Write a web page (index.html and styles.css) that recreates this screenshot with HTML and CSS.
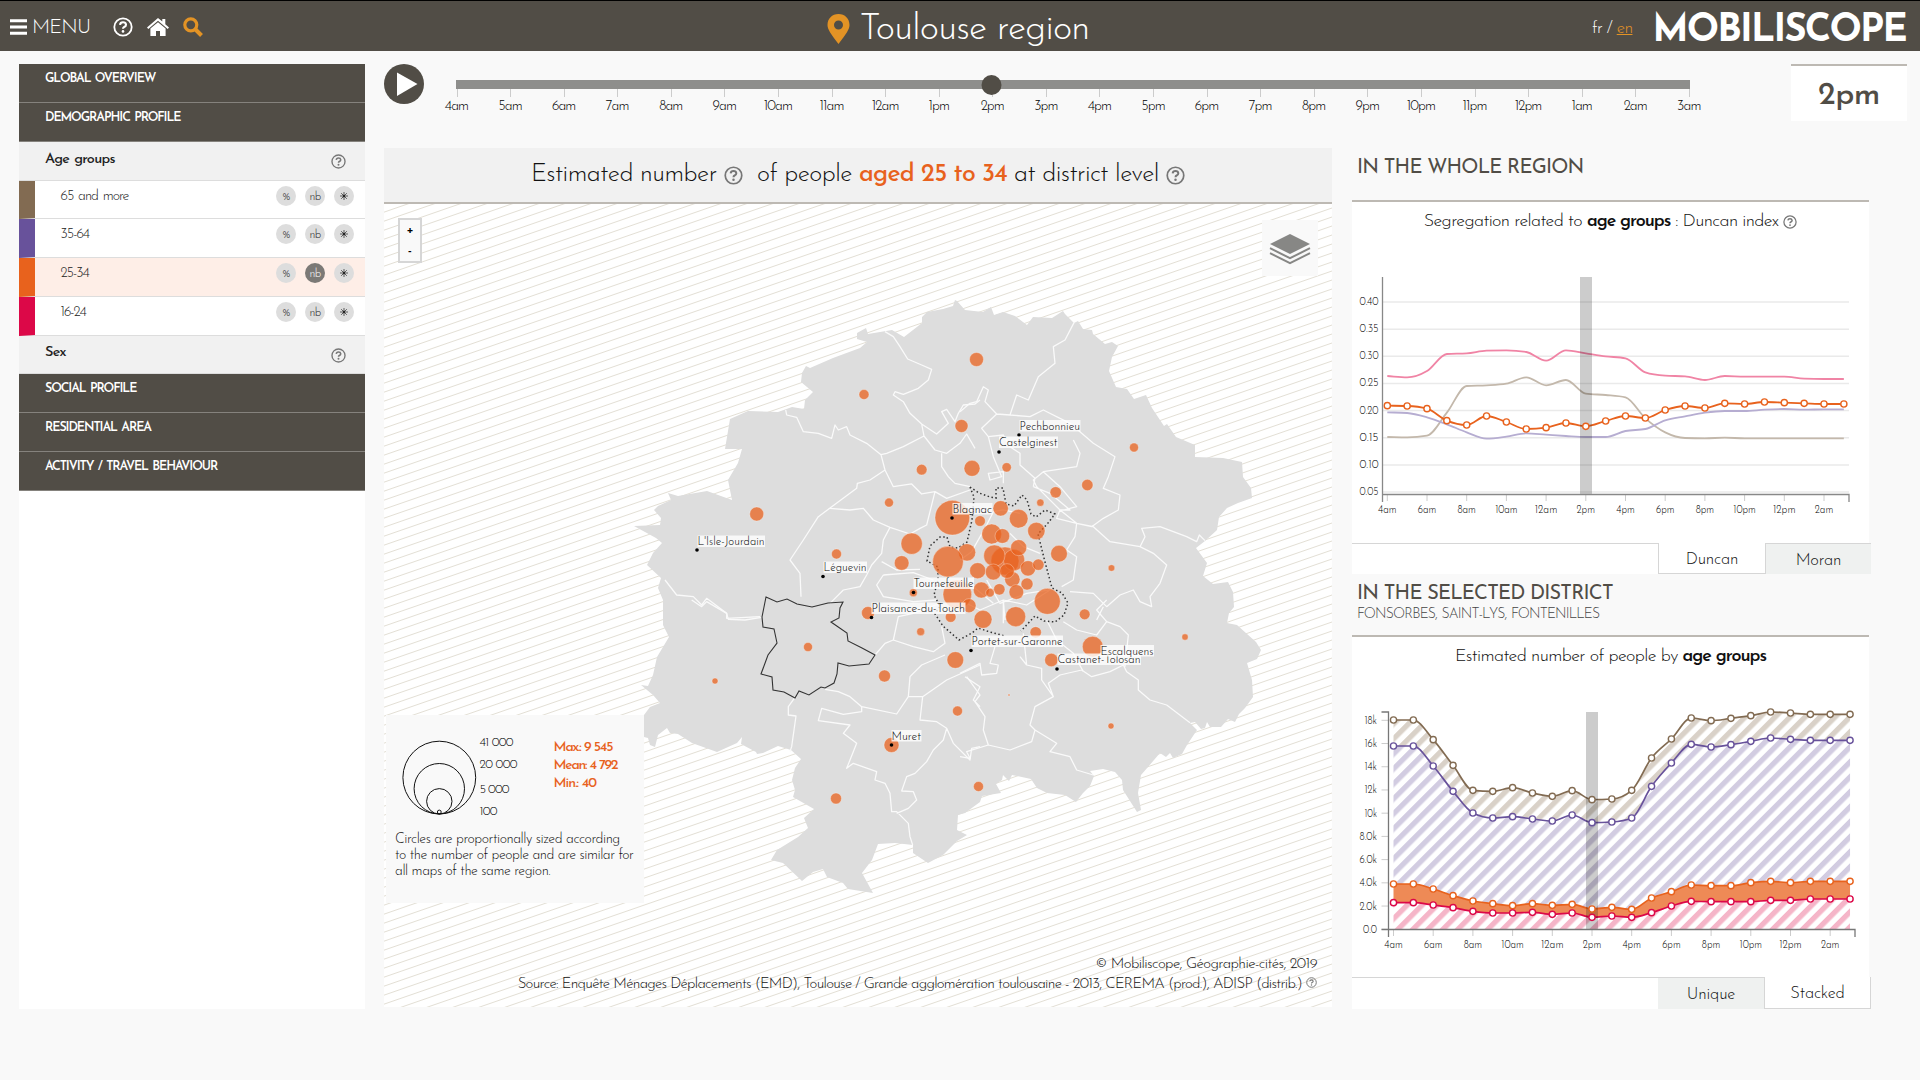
FILE: index.html
```html
<!DOCTYPE html>
<html lang="en">
<head>
<meta charset="utf-8">
<title>Mobiliscope - Toulouse region</title>
<link rel="stylesheet" href="styles.css">
</head>
<body>
<svg class="defs" width="0" height="0" aria-hidden="true">
  <symbol id="help" viewBox="0 0 20 20"><circle cx="10" cy="10" r="8.7" fill="none" stroke="currentColor" stroke-width="1.8"/><path d="M7 7.8Q7.3 5.3 10 5.3T13 7.7Q13 9.2 11.2 10Q10 10.6 10 11.8" fill="none" stroke="currentColor" stroke-width="2.1"/><circle cx="10" cy="14.4" r="1.3" fill="currentColor"/></symbol>
  <symbol id="star" viewBox="0 0 8 8"><path d="M4 0v8M0 4h8M1.200 1.200l5.600 5.600M6.800 1.200 1.200 6.800" stroke="currentColor" stroke-width=".7"/><circle cx="4" cy="4" r="1.200" fill="currentColor"/></symbol>
</svg>
<header class="topbar">
  <div class="nav">
    <svg class="burger" width="17" height="16" viewBox="0 0 17 16"><path d="M0 1.7h17M0 8h17M0 14.3h17" stroke="#fff" stroke-width="3"/></svg>
    <span class="menu">MENU</span>
    <svg class="nav-help" width="20" height="20"><use href="#help"/></svg>
    <svg class="home" width="22" height="18" viewBox="0 0 22 18"><path d="M11 0 0 9.4l1.3 1.5L11 2.8l9.7 8.1L22 9.4l-3.7-3.2V1h-3v2.6z" fill="#fff"/><path d="M11 4.2 3.4 10.500V18h5.600v-5h4v5h5.600v-7.500z" fill="#fff"/></svg>
    <svg class="search" width="20" height="20" viewBox="0 0 20 20"><circle cx="7.800" cy="7.800" r="6" fill="none" stroke="#e39325" stroke-width="3.200"/><path d="m12 12 6.500 6.500" stroke="#e39325" stroke-width="4"/></svg>
  </div>
  <h1 class="city"><svg width="23" height="30" viewBox="0 0 23 30"><path fill="#e39325" fill-rule="evenodd" d="M11.500 0C5 0 .5 4.700.5 11c0 4.500 3.500 9 11 19 7.500-10 11-14.500 11-19C22.500 4.700 18 0 11.500 0zm0 6.500a4.500 4.500 0 1 1 0 9 4.500 4.500 0 0 1 0-9z"/></svg><span>Toulouse region</span></h1>
  <div class="brand"><span class="lang">fr / <a>en</a></span><span class="logo">MOBILISCOPE</span></div>
</header>

<main class="page">
  <nav class="sidebar">
    <div class="cat">GLOBAL OVERVIEW</div>
    <div class="cat">DEMOGRAPHIC PROFILE</div>
    <div class="sub"><span>Age groups</span><svg width="15" height="15"><use href="#help"/></svg></div>
    <div class="opt brown"><span>65 and more</span><i>%</i><i>nb</i><i><svg width="8" height="8"><use href="#star"/></svg></i></div>
    <div class="opt purple"><span>35-64</span><i>%</i><i>nb</i><i><svg width="8" height="8"><use href="#star"/></svg></i></div>
    <div class="opt orange"><span>25-34</span><i>%</i><i class="on">nb</i><i><svg width="8" height="8"><use href="#star"/></svg></i></div>
    <div class="opt red"><span>16-24</span><i>%</i><i>nb</i><i><svg width="8" height="8"><use href="#star"/></svg></i></div>
    <div class="sub sex"><span>Sex</span><svg width="15" height="15"><use href="#help"/></svg></div>
    <div class="cat">SOCIAL PROFILE</div>
    <div class="cat">RESIDENTIAL AREA</div>
    <div class="cat">ACTIVITY / TRAVEL BEHAVIOUR</div>
  </nav>

  <div class="content">
    <section class="timeline">
      <svg id="slider" width="1330" height="70" viewBox="384 60 1330 70"></svg>
      <div class="clock">2pm</div>
    </section>
    <div class="columns">
      <section class="mapcard">
        <h2>Estimated number <svg width="19" height="19"><use href="#help"/></svg>  of people <b>aged 25 to 34</b> at district level <svg width="19" height="19"><use href="#help"/></svg></h2>
        <div class="map">
          <svg width="948" height="803" viewBox="384 204 948 803">
            <defs><pattern id="land" x="630" y="910" width="26" height="9" patternUnits="userSpaceOnUse"><rect width="26" height="9" fill="#fff"/><path d="M-26 18 52 -9M-26 9 26 -9M0 18 52 0" stroke="#e3dfd5" stroke-width="1"/></pattern></defs>
            <rect x="384" y="204" width="948" height="803" fill="url(#land)"/>
            <path class="region" d="M955 300 957 301 965 310 983 312 991 307 994 315 1003 312 1015 316 1027 325 1033 317 1052 318 1063 311 1065 314 1074 323 1078 321 1083 329 1092 330 1093 334 1105 344 1112 342 1118 346 1112 357 1109 371 1116 387 1127 389 1134 399 1146 395 1152 408 1164 426 1167 424 1176 437 1195 445 1195 457 1223 458 1242 462 1243 477 1251 488 1252 498 1238 503 1227 508 1219 517 1217 530 1205 541 1196 548 1207 563 1203 576 1213 584 1228 582 1233 592 1234 607 1229 613 1227 623 1237 625 1256 642 1261 650 1257 659 1247 663 1252 680 1253 697 1245 708 1239 714 1235 722 1228 719 1221 727 1210 727 1207 722 1205 728 1201 729 1195 722 1190 723 1197 730 1187 745 1182 754 1173 758 1170 753 1166 757 1160 753 1148 767 1141 775 1138 793 1141 810 1137 812 1123 790 1122 780 1115 772 1103 769 1090 771 1094 776 1090 786 1083 793 1076 802 1065 795 1047 793 1037 788 1031 779 1012 775 1009 781 1003 775 1002 780 996 784 1001 793 982 796 980 802 965 813 958 815 957 830 967 835 957 841 943 855 928 863 913 853 913 845 895 843 878 844 872 860 862 873 873 893 848 889 843 883 827 877 823 869 813 872 802 881 783 863 771 860 777 850 798 837 808 828 804 818 814 809 793 797 795 790 792 780 795 768 801 759 791 750 778 746 763 753 757 754 756 752 741 744 742 737 737 743 717 752 692 743 678 734 670 733 667 728 658 735 655 747 650 745 648 738 644 737 644 715 650 707 660 703 653 695 641 685 648 686 653 675 657 657 669 637 663 625 663 600 658 588 661 578 647 565 653 553 662 543 656 538 634 526 660 525 661 518 654 510 658 506 671 500 668 493 678 496 707 491 732 500 728 480 738 463 742 449 725 449 730 419 748 411 778 412 792 407 804 409 805 400 813 392 801 382 802 373 806 366 810 368 833 358 860 348 867 342 857 339 857 333 866 328 868 334 892 330 904 337 922 323 922 317 927 312 943 309 953 306Z"/>
            <g class="borders">
              <g transform="translate(620 280) scale(.33333)">
                <path d="M795 155 820 170 840 200 863 237 905 255 935 268 925 300 895 325 850 343 825 335 820 345 850 365 870 400 905 432 950 462 985 430 965 395 980 388 1005 425 1015 400 1030 375 1065 372 1080 360M905 432 912 468 850 500 800 520 783 524 740 490 690 465 680 440 655 450 645 435 635 475 595 460 550 455 530 412 500 405 497 390M783 524 795 570 750 600 712 610 710 625 595 710 550 780 510 840 540 880 543 950M795 570 820 620 875 612 905 642 945 635 920 735 900 745 870 762 810 742 760 720 730 685 690 690 630 685M912 468 945 510 980 520 1020 490 1040 462 1065 505M965 520 965 560 985 590 1005 610 1050 620M945 635 980 655 1050 630M810 742 790 780 785 820 755 855 740 885 720 920 670 930 630 970M785 845 830 870 900 868M790 885 880 878 940 900M790 885 770 915 790 950 880 965 950 960M135 900 170 945 220 950 245 975 260 955 320 1000 320 1015 420 1010"/>
              </g>
              <g transform="translate(960 280) scale(.33333)">
                <path d="M342 128 315 180 280 200 285 250 235 290 205 360 170 345 150 405 210 410 250 390 330 430 400 490 465 530 445 590 430 625 480 645 475 690 430 715 395 740 350 730 300 690 230 620 220 600 250 575 350 560 360 520 340 480M0 395 30 370 50 365 70 320 85 330 75 365 110 402 150 405M110 402 65 445 85 470 130 465 150 500 180 520 180 555 225 595 220 620M85 470 100 530 125 590 90 600 85 580 130 575 130 610M250 575 300 620 350 680 310 690M220 620 270 640 330 690 300 690 290 715 350 730 400 740 450 785 540 800 555 770 545 745 600 740 680 770 710 785 718 765 735 782M540 800 580 820 620 855 600 910 570 950 575 980 540 965 520 930 480 945 440 980 400 940 330 935M350 730 345 770 320 810 350 830 340 900 305 920M0 840 35 815 80 735 100 695 130 690 180 700M80 900 120 970 200 940 270 930M40 920 100 970M150 760 190 800 240 820M0 960 60 990 130 960 200 975 270 930M130 960 135 1020M430 980 410 1020"/>
              </g>
              <g transform="translate(620 600) scale(.33333)">
                <path d="M215 0 245 20 260 5 320 40 325 58 375 60 425 52M765 165 795 130 820 120 835 50 880 40 960 10M820 120 880 140 940 155 975 130 965 80M525 292 505 320 505 345 528 348 515 440 510 455M615 268 655 275 690 290 725 320 725 335 670 343 605 325 595 362 690 375 670 400 710 430 680 505 700 490 770 515 765 540 795 550 810 580 815 635 830 635 865 670 870 710 878 735M725 320 830 342 865 290 870 230 905 195 975 165M865 290 908 290 980 240 1080 195M908 290 900 360 950 365 980 385 970 420 940 450 920 485 885 520 860 530 845 573 880 575 890 600 865 625 830 640M980 385 1000 430 1050 480 1055 445 1080 440M1035 230 1080 260 1060 300 1080 320"/>
              </g>
              <g transform="translate(960 600) scale(.33333)">
                <path d="M0 220 60 190 65 225 110 220 115 195 90 190 105 140M20 230 60 285 45 305 75 350 70 390 85 435 150 450 215 425 225 390 210 375 225 320 280 290 245 240 245 205 200 195 190 100M85 435 20 455 30 475 0 470M225 390 290 430 270 455 330 470 350 510 400 525M280 290 265 250 300 225 365 210 395 230 450 215 490 195 500 215 535 240 535 270 570 300 620 315 690 368M260 60 290 120 340 160 370 215M310 65 350 90 410 105 440 65 480 80 505 105 495 200M440 0 410 30 440 65M180 170 200 195M130 0 130 70"/>
              </g>
            </g>
            <path class="city-limit" d="M970 487 979 493 990 497 996 498 996 488 1003 488 1006 504 1014 506 1022 495 1027 500 1031 514 1036 517 1045 510 1055 514 1048 523 1038 534 1045 562 1052 588 1062 593 1068 603 1064 615 1055 622 1044 621 1035 616 1021 631M970 487 974 497 972 520 967 542 958 548 950 547 947 537 940 537 930 546 927 561 938 567 938 580 934 595 940 606 935 614 943 626 959 640 972 633 978 628 990 632 1005 636"/>
            <path class="selected" d="M766 597 777 602 787 599 797 604 812 607 828 603 843 602 840 608 839 618 831 622 847 633 848 641 862 648 875 655 869 664 849 666 838 663 837 674 834 683 825 688 821 687 809 695 799 691 795 698 784 692 773 690 772 677 761 674 768 655 777 643 774 629 763 627 762 617Z"/>
            <g id="bubbles"></g>
            <g id="towns"></g>
          </svg>
          <div class="zoom"><span>+</span><span>-</span></div>
          <div class="layers"><svg width="42" height="32" viewBox="0 0 42 32"><path d="M21 1 41 11 21 21 1 11z" fill="#878785"/><path d="M1 15.200 21 25.200 41 15.200M1 20.200 21 30.200 41 20.200" fill="none" stroke="#878785" stroke-width="2"/></svg></div>
          <div class="legend">
            <svg width="258" height="113" viewBox="386 715 258 113">
              <g fill="none" stroke="#111"><circle cx="439.300" cy="777.600" r="36.400"/><circle cx="439.300" cy="788.700" r="25.200"/><circle cx="439.300" cy="801.300" r="12.700"/><circle cx="439.300" cy="812" r="1.900"/></g>
              <g class="sizes"><text x="479.500" y="746" textLength="34">41 000</text><text x="479.500" y="768" textLength="38">20 000</text><text x="479.500" y="793" textLength="30">5 000</text><text x="479.500" y="815" textLength="18">100</text></g>
              <g class="stats"><text x="553.500" y="751" textLength="60">Max.: 9 545</text><text x="553.500" y="769" textLength="65">Mean: 4 792</text><text x="553.500" y="787" textLength="43.500">Min.: 40</text></g>
            </svg>
            <p>Circles are proportionally sized according<br>to the number of people and are similar for<br>all maps of the same region.</p>
          </div>
          <div class="credits"><div class="copy">© Mobiliscope, Géographie-cités, 2019</div><div class="source">Source: Enquête Ménages Déplacements (EMD), Toulouse / Grande agglomération toulousaine - 2013, CEREMA (prod.), ADISP (distrib.) <svg width="11" height="11"><use href="#help"/></svg></div></div>
        </div>
      </section>

      <aside class="charts">
        <h3 class="first">IN THE WHOLE REGION</h3>
        <div class="panel">
          <h4>Segregation related to <b>age groups</b> : Duncan index <svg width="14" height="14"><use href="#help"/></svg></h4>
          <svg id="duncan" width="517" height="301" viewBox="1352 242 517 301"></svg>
        </div>
        <div class="tabs"><span class="gap"></span><span class="tab active">Duncan</span><span class="tab">Moran</span></div>
        <h3 class="second">IN THE SELECTED DISTRICT</h3>
        <div class="district">FONSORBES, SAINT-LYS, FONTENILLES</div>
        <div class="panel">
          <h4>Estimated number of people by <b>age groups</b></h4>
          <svg id="stacked" width="517" height="300" viewBox="1352 677 517 300"></svg>
        </div>
        <div class="tabs last"><span class="gap"></span><span class="tab">Unique</span><span class="tab active">Stacked</span></div>
      </aside>
    </div>
  </div>
</main>
<script src="script.js"></script>
</body>
</html>
```
FILE: styles.css
```css
* { box-sizing: border-box; }
body { margin: 0; height: 1080px; overflow: hidden; background: #f9f9f9; color: #222; font-family: "Josefin Sans", Lato, sans-serif; font-weight: 350; font-size: 14px; }
svg { display: block; }
.defs { position: absolute; }
h1, h2, h3, h4, p { margin: 0; font-weight: 350; }

.topbar { height: 51px; background: #514d46; border-top: 1px solid #000; color: #fff; display: grid; grid-template-columns: 1fr auto 1fr; align-items: center; padding: 0 14px 0 10px; }
.nav { display: flex; align-items: center; }
.menu { font-size: 20px; width: 81px; padding: 3px 0 0 5px; letter-spacing: -.8px; }
.home { margin-left: 14px; }
.nav-help { margin-left: 5px; }
.search { margin-left: 14px; }
.city { display: flex; align-items: center; gap: 10px; font-size: 37px; font-weight: 350; letter-spacing: -.8px; line-height: 44px; white-space: nowrap; }
.city svg { margin-top: 4px; }
.city span { padding-top: 7px; }
.brand { display: flex; justify-content: flex-end; align-items: center; }
.lang { font-size: 17px; margin-right: 20px; padding-top: 4px; letter-spacing: -.6px; }
.lang a { color: #e39325; text-decoration: underline; }
.logo { font-size: 38px; font-weight: 700; letter-spacing: -1.800px; line-height: 40px; padding-top: 10px; }

.page { display: flex; gap: 19px; padding: 13px 13px 0 19px; }
.sidebar { width: 346px; height: 945px; background: #fff; }
.cat { height: 39px; background: #514d46; border-bottom: 1px solid #85827d; color: #fff; font-size: 12.500px; font-weight: 650; padding: 7px 26px; line-height: 17px; letter-spacing: -1.100px; word-spacing: 1.500px; }
.sub { height: 39px; background: #f1f1f1; border-bottom: 1px solid #ddd; padding: 0 19px 0 26px; display: flex; justify-content: space-between; font-size: 14.500px; font-weight: 550; line-height: 36px; }
.sub span { letter-spacing: -.7px; word-spacing: 1px; }
.sub.sex { height: 38px; line-height: 34px; }
.sub svg { margin-top: 12px; color: #777; }
.opt { height: 39px; border-bottom: 1px solid #ddd; border-left: 16px solid; display: flex; gap: 9px; padding: 5px 11px 0 25.500px; font-size: 14px; color: #222; }
.opt span { flex: 1; line-height: 22px; letter-spacing: -1px; word-spacing: 1.500px; }
.opt i { width: 20px; height: 20px; border-radius: 50%; background: #ddd; font-style: normal; font-size: 11.500px; line-height: 22px; text-align: center; color: #222; letter-spacing: -.6px; }
.opt i svg { margin: 6px; }
.opt i.on { background: #7b7976; color: #fff; }
.brown { border-left-color: #826b52; height: 38px; }
.purple { border-left-color: #68529b; }
.orange { border-left-color: #e8621d; background: #feeee7; }
.red { border-left-color: #dc0848; }

.content { width: 1523px; }
.timeline { height: 84px; display: flex; justify-content: space-between; }
#slider { margin-top: -4px; }
#slider text { font-size: 14px; text-anchor: middle; letter-spacing: -.9px; }
.clock { width: 116px; height: 57px; background: #fff; border-top: 2px solid #bdb9b3; text-align: center; font-size: 32px; line-height: 61px; font-weight: 500; letter-spacing: -.5px; color: #514d46; }
.columns { display: flex; gap: 20px; }

.mapcard { width: 948px; }
.mapcard h2 { height: 56px; background: #f1f1f1; border-bottom: 2px solid #bdb9b3; font-size: 25px; line-height: 58px; display: flex; justify-content: center; align-items: center; white-space: pre; letter-spacing: -.55px; color: #111; }
.mapcard h2 svg { color: #777; }
.mapcard h2 b { color: #e8621d; font-weight: 550; letter-spacing: -.8px; }
.map { position: relative; height: 803px; }
.region { fill: #ddd; }
.borders { fill: none; stroke: #fafafa; stroke-width: 3.800; stroke-linejoin: round; }
.city-limit { fill: none; stroke: #333; stroke-width: 1.500; stroke-dasharray: 1.500 2.500; }
.selected { fill: none; stroke: #333; stroke-width: 1.100; }
#bubbles circle { fill: #e8621d; fill-opacity: .75; stroke: #fff; stroke-opacity: .4; stroke-width: .8; }
#towns rect { fill: #fff; fill-opacity: .8; }
#towns text { font-size: 12px; fill: #000; }
.zoom { position: absolute; left: 14px; top: 14px; width: 24px; height: 45px; border: 2px solid #d6d6d6; background: #f9f9f9; display: grid; grid-template-rows: 1fr 1fr; text-align: center; line-height: 21px; font-size: 14px; font-weight: 500; color: #000; }
.layers { position: absolute; left: 878px; top: 16px; width: 56px; height: 56px; background: #f9f9f9; padding: 13px 7px; }
.legend { position: absolute; left: 2px; top: 511px; width: 258px; height: 188px; background: #f9f9f9; }
.legend p { padding: 4px 0 0 9px; font-size: 14px; line-height: 16px; letter-spacing: -.45px; white-space: nowrap; color: #111; }
.sizes { font-size: 12.500px; }
.stats { font-size: 14px; font-weight: 550; fill: #e8621d; }
.credits { position: absolute; right: 15px; bottom: 12px; text-align: right; line-height: 20px; font-size: 15px; white-space: nowrap; color: #111; }
.copy { letter-spacing: -.6px; }
.source { letter-spacing: -.74px; }
.credits svg { display: inline-block; color: #777; }

.charts { width: 519px; }
h3 { font-size: 20px; font-weight: 450; color: #514d46; padding-left: 5px; letter-spacing: -.8px; }
h3.first { height: 52px; line-height: 40px; }
h3.second { height: 26px; line-height: 40px; }
.district { height: 35px; padding-left: 5px; font-size: 14px; line-height: 29px; color: #444; letter-spacing: -.85px; word-spacing: 1px; }
.panel { width: 517px; background: #fff; border-top: 2px solid #bdb9b3; }
h4 { height: 40px; line-height: 38px; font-size: 18px; display: flex; align-items: center; justify-content: center; white-space: pre; color: #111; letter-spacing: -.64px; }
h4 b { font-weight: 600; letter-spacing: -1px; }
h4 svg { color: #777; }
.tabs { height: 31px; display: grid; grid-template-columns: 306px 108px 105px; grid-template-rows: 31px; background: #fff; }
.tabs.last { height: 32px; grid-template-columns: 306px 106px 107px; grid-template-rows: 32px; }
.gap { border-top: 1px solid #d6d6d6; }
.tab { border-top: 1px solid #d6d6d6; background: #eff1f0; text-align: center; font-size: 16.500px; line-height: 35px; letter-spacing: -.2px; color: #111; }
.tab.active { background: #fff; border: 1px solid #d6d6d6; border-top: 0; }
.tick { font-size: 11.500px; fill: #000; }
```
FILE: script.js
```js
const NS = 'http://www.w3.org/2000/svg';
function add(parent, tag, attrs, text) {
  const e = document.createElementNS(NS, tag);
  for (const k in attrs) e.setAttribute(k, attrs[k]);
  if (text !== undefined) e.textContent = text;
  parent.appendChild(e);
  return e;
}
const $ = id => document.getElementById(id);
const hours = '4am 5am 6am 7am 8am 9am 10am 11am 12am 1pm 2pm 3pm 4pm 5pm 6pm 7pm 8pm 9pm 10pm 11pm 12pm 1am 2am 3am'.split(' ');

/* time slider */
const s = $('slider');
add(s, 'circle', {cx: 404, cy: 84, r: 20, fill: '#514d46'});
add(s, 'path', {d: 'M397 72.500 417.500 84 397 96z', fill: '#fff'});
hours.forEach((h, i) => {
  const x = 456.500 + i * 53.580;
  add(s, 'path', {d: `M${Math.round(x) + .5} 89v8`, stroke: '#ccc'});
  add(s, 'text', {x, y: 110}, h);
});
add(s, 'rect', {x: 456, y: 80, width: 1234, height: 9, fill: '#8e8e8c'});
add(s, 'circle', {cx: 991.500, cy: 85, r: 10, fill: '#514d46'});

/* map bubbles: x, y, r */
const dense = [[157,173,52],[65,29,16],[216,25,24],[320,22,14],[562,75,17],[467,97,17],[421,128,11],[302,145,23],[356,176,28],[240,183,16],[409,213,26],[275,222,30],[307,228,22],[35,251,32],[201,277,26],[477,281,25],[144,305,46],[5,309,22],[315,303,42],[342,300,32],[283,287,32],[356,263,24],[384,325,23],[415,314,17],[233,332,24],[280,336,24],[337,358,23],[321,333,22],[381,372,18],[349,396,22],[298,388,17],[244,390,24],[270,398,13],[172,403,43],[207,437,21],[442,424,39],[347,470,30],[249,478,27],[152,471,16],[62,515,12],[554,463,16],[407,517,17],[40,398,12],[578,560,31],[166,600,25],[454,600,20]]
  .map(([x, y, r]) => [900 + x / 3, 460 + y / 3, r / 3]);
const sparse = [[976.500,359.500,7],[864,394.500,5],[961.500,426,6.500],[1134,447.500,4.500],[756.700,514,7],[836.500,554,5],[1111.500,568,3.300],[868,613,6.500],[808,647,4.500],[715,681,3],[884.500,676,6],[957.500,711,5],[891.500,745,7.500],[836,798.500,5.500],[978.500,786.500,5],[1111,726,3],[1185,637,3.200],[1009,695,1],[889,502.600,4.500]];
[...dense, ...sparse].forEach(([cx, cy, r]) => add($('bubbles'), 'circle', {cx, cy, r}));

/* towns: name, dot x, dot y, label width, label x, label top */
[['Pechbonnieu',1019,435,61,1019.500,420],['Castelginest',999,452,59,999,436.500],['Blagnac',952,518,40,952.500,503],["L'Isle-Jourdain",697,550,67.500,697.500,535.500],['Léguevin',823,576.500,43.500,823.500,561.500],['Tournefeuille',913.500,592.500,60.500,913.500,577.500],['Plaisance-du-Touch',871.500,617.500,94,871.500,602.500],['Portet-sur-Garonne',971,650.500,91.500,971.500,635.500],['Castanet-Tolosan',1057,669,83.500,1057.500,653.500],['Escalquens',0,0,53.500,1100.500,645],['Muret',891.500,745,30,891.500,730]].forEach(([n, dx, dy, w, x, y]) => {
  const g = $('towns');
  add(g, 'rect', {x, y, width: w, height: 11.500});
  add(g, 'text', {x, y: y + 9.500, textLength: w - .5, lengthAdjust: 'spacingAndGlyphs'}, n);
  if (dx) add(g, 'circle', {cx: dx, cy: dy, r: 1.800});
});

/* monotone cubic through the points */
function curve(pts) {
  const n = pts.length, m = [], d = [];
  for (let i = 0; i < n - 1; i++) d.push((pts[i + 1][1] - pts[i][1]) / (pts[i + 1][0] - pts[i][0]));
  for (let i = 0; i < n; i++) {
    if (i === 0 || i === n - 1) m.push(d[i ? n - 2 : 0]);
    else if (d[i - 1] * d[i] <= 0) m.push(0);
    else m.push(Math.sign(d[i]) * Math.min(2 * Math.abs(d[i]), 2 * Math.abs(d[i - 1]), Math.abs(d[i] + d[i - 1]) / 2));
  }
  let p = `${pts[0]}`;
  for (let i = 1; i < n; i++) {
    const [x0, y0] = pts[i - 1], [x1, y1] = pts[i], h = (x1 - x0) / 3;
    p += `C${x0 + h} ${y0 + h * m[i - 1]} ${x1 - h} ${y1 - h * m[i]} ${x1} ${y1}`;
  }
  return p;
}
function hourAxis(c, x0, y) {
  hours.forEach((h, i) => {
    if (i % 2) return;
    add(c, 'path', {d: `M${x0 + i * 19.850} ${y}v6`, stroke: '#ccc'});
    add(c, 'text', {class: 'tick', x: x0 + i * 19.850, y: y + 18, 'text-anchor': 'middle', textLength: h.length > 3 ? 22.500 : 18.500, lengthAdjust: 'spacingAndGlyphs'}, h);
  });
}
function dots(c, pts, color) {
  pts.forEach(([cx, cy]) => add(c, 'circle', {cx, cy, r: 3.100, fill: '#fff', stroke: color, 'stroke-width': 1.400}));
}

/* Duncan index */
const c1 = $('duncan');
['0.40','0.35','0.30','0.25','0.20','0.15','0.10','0.05'].forEach((t, i) => {
  const y = 302 + i * 27.150;
  add(c1, 'path', {d: `M1383 ${y}h466`, stroke: '#eaeaea', 'stroke-width': 1.500});
  add(c1, 'text', {class: 'tick', x: 1378.500, y: y + 3, 'text-anchor': 'end', textLength: 19, lengthAdjust: 'spacingAndGlyphs'}, t);
});
const index = {
  '#f084a5': [588,592,573,522,520,512,511,516,542,511,520,529,535,577,587,589,600,588,590,590,590,596,597,597],
  '#c3b8ab': [771,772,767,698,618,616,611,592,616,600,641,645,652,715,757,774,775,773,775,775,775,775,775,775],
  '#b6add1': [697,699,712,733,757,776,770,760,764,768,771,771,753,747,721,709,698,693,693,689,687,689,688,688],
  '#e8621d': [677,678,686,722,735,708,726,747,743,729,739,723,708,714,690,678,684,670,672,666,668,670,672,672]
};
let p1;
for (const color in index) {
  p1 = index[color].map((v, i) => [1387.300 + i * 19.850, 180 + v / 3]);
  add(c1, 'path', {d: 'M' + curve(p1), fill: 'none', stroke: color, 'stroke-width': 1.800});
}
add(c1, 'rect', {x: 1580, y: 277, width: 12, height: 217, fill: '#000', 'fill-opacity': .2});
dots(c1, p1, '#e8621d');
hourAxis(c1, 1387.300, 495);
add(c1, 'path', {d: 'M1382.500 277v225M1382.500 494.500H1849v7.500', fill: 'none', stroke: '#888', 'stroke-width': 1.300});

/* stacked population */
const c2 = $('stacked');
const levels = [
  ['#826b52', '#d9d1c8', [450,450,509,586,661,664,653,669,679,662,689,687,661,564,507,444,452,445,437,426,429,433,433,433]],
  ['#68529b', '#d2cce1', [528,528,588,664,729,744,740,747,753,735,758,756,744,649,579,523,531,524,514,504,508,511,511,511]],
  ['#e8621d', null, [942,942,957,977,993,1001,1007,1001,1006,1003,1017,1012,1018,984,965,945,947,947,938,934,938,934,934,934]],
  ['#dc0848', '#f5b5c8', [998,998,1005,1013,1024,1029,1029,1027,1033,1029,1042,1038,1042,1028,1008,994,995,995,995,991,991,987,987,987]]
].map(([color, hatch, v]) => ({color, hatch, pts: v.map((y, i) => [1393.500 + i * 19.850, 570 + y / 3])}));
const defs = add(c2, 'defs', {});
levels.forEach((l, k) => {
  if (l.hatch) {
    const p = add(defs, 'pattern', {id: 'hatch' + k, width: 10.600, height: 10.600, patternUnits: 'userSpaceOnUse', patternTransform: 'rotate(45)'});
    add(p, 'rect', {width: 10.600, height: 10.600, fill: '#fff'});
    add(p, 'rect', {width: 5.300, height: 10.600, fill: l.hatch});
  }
  const floor = levels[k + 1] ? [...levels[k + 1].pts].reverse() : [[1850, 929.300], [1393.500, 929.300]];
  add(c2, 'path', {d: 'M' + curve(l.pts) + 'L' + curve(floor) + 'Z', fill: l.hatch ? `url(#hatch${k})` : '#ee8a56'});
});
levels.forEach(l => add(c2, 'path', {d: 'M' + curve(l.pts), fill: 'none', stroke: l.color, 'stroke-width': 1.700}));
add(c2, 'rect', {x: 1586, y: 712, width: 12, height: 218, fill: '#000', 'fill-opacity': .2});
levels.forEach(l => dots(c2, l.pts, l.color));
['18k','16k','14k','12k','10k','8.0k','6.0k','4.0k','2.0k','0.0'].forEach((t, i) => {
  const y = 720.300 + i * 23.220;
  add(c2, 'path', {d: `M1381.500 ${y}h7`, stroke: '#ccc'});
  add(c2, 'text', {class: 'tick', x: 1377, y: y + 3.500, 'text-anchor': 'end', textLength: i < 5 ? 12.500 : i < 9 ? 17.500 : 14, lengthAdjust: 'spacingAndGlyphs'}, t);
});
hourAxis(c2, 1393.500, 930);
add(c2, 'path', {d: 'M1381.500 712h7v225M1381.500 929.500H1855v7.500', fill: 'none', stroke: '#777', 'stroke-width': 1.300});
```
